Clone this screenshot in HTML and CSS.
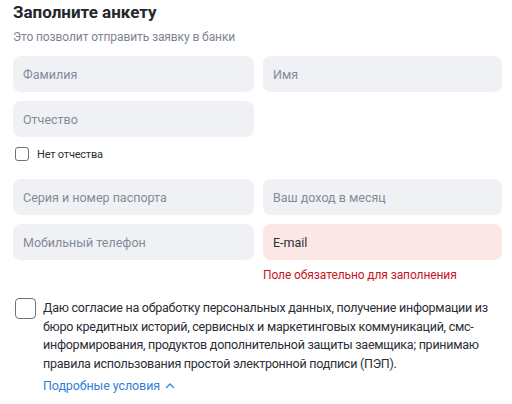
FILE: index.html
```html
<!DOCTYPE html>
<html lang="ru">
<head>
<meta charset="UTF-8">
<title>Заполните анкету</title>
<link rel="stylesheet" href="styles.css">
</head>
<body>
<div class="form">
  <h1 class="title">Заполните анкету</h1>
  <p class="subtitle">Это позволит отправить заявку в банки</p>

  <div class="grid">
    <div class="field"><span class="placeholder">Фамилия</span></div>
    <div class="field"><span class="placeholder">Имя</span></div>
    <div class="field"><span class="placeholder">Отчество</span></div>
    <div></div>
  </div>

  <label class="check small">
    <span class="box"></span>
    <span>Нет отчества</span>
  </label>

  <div class="grid">
    <div class="field"><span class="placeholder">Серия и номер паспорта</span></div>
    <div class="field"><span class="placeholder">Ваш доход в месяц</span></div>
    <div class="field"><span class="placeholder">Мобильный телефон</span></div>
    <div class="cell">
      <div class="field error"><span class="value">E-mail</span></div>
      <div class="error-text">Поле обязательно для заполнения</div>
    </div>
  </div>

  <div class="consent">
    <span class="box big"></span>
    <div class="consent-body">
      <p class="consent-text">Даю согласие на обработку персональных данных, получение информации из бюро кредитных историй, сервисных и маркетинговых коммуникаций, смс-информирования, продуктов дополнительной защиты заемщика; принимаю правила использования простой электронной подписи (ПЭП).</p>
      <a class="more" href="#">Подробные условия
        <svg width="10" height="10" viewBox="0 0 10 10"><path d="M1.5 6.5 L5 3 L8.5 6.5" fill="none" stroke="#2f7fd6" stroke-width="1.3" stroke-linecap="round" stroke-linejoin="round"/></svg>
      </a>
    </div>
  </div>
</div>
</body>
</html>
```

FILE: styles.css
```css
body {
    margin: 0;
    background: #ffffff;
    font-family: Roboto, "Noto Sans", sans-serif;
    color: #2b2e36;
}

.form {
    padding: 0 10px 0 13px;
}

.title {
    margin: 0;
    padding-top: 2px;
    font-size: 17px;
    line-height: 20px;
    font-weight: 700;
    color: #23262d;
}

.subtitle {
    margin: 7px 0 0 0;
    font-size: 12px;
    line-height: 16px;
    letter-spacing: -0.1px;
    color: #7d8392;
}

.grid {
    display: grid;
    grid-template-columns: 241px 239px;
    column-gap: 9px;
    row-gap: 9px;
    margin-top: 11px;
}

.field {
    height: 36px;
    border-radius: 8px;
    background: #f0f1f5;
    display: flex;
    align-items: center;
    padding: 0 10px;
    font-size: 12.5px;
}

.placeholder {
    color: #858a99;
}

.field.error {
    background: #fbe7e6;
}

.value {
    color: #2b2e36;
}

.error-text {
    margin-top: 7px;
    font-size: 12px;
    line-height: 16px;
    letter-spacing: -0.1px;
    color: #c8161d;
}

.check {
    display: flex;
    align-items: center;
    gap: 8px;
    margin: 10px 0 0 2px;
    font-size: 11px;
    letter-spacing: -0.2px;
    color: #2b2e36;
}

.check + .grid {
    margin-top: 18px;
}

.box {
    width: 12px;
    height: 12px;
    border: 1.5px solid #6d7281;
    border-radius: 3px;
    flex: none;
}

.box.big {
    width: 19px;
    height: 19px;
    border-radius: 4px;
}

.consent {
    display: flex;
    gap: 7px;
    margin: 15px 0 0 2px;
}

.consent-text {
    margin: 0;
    padding-top: 1px;
    font-size: 12.5px;
    line-height: 18.5px;
    letter-spacing: -0.25px;
    color: #2b2e36;
}

.more {
    display: inline-flex;
    align-items: center;
    gap: 5px;
    margin-top: 5px;
    font-size: 12.5px;
    letter-spacing: -0.1px;
    color: #2f7fd6;
    text-decoration: none;
}
```
